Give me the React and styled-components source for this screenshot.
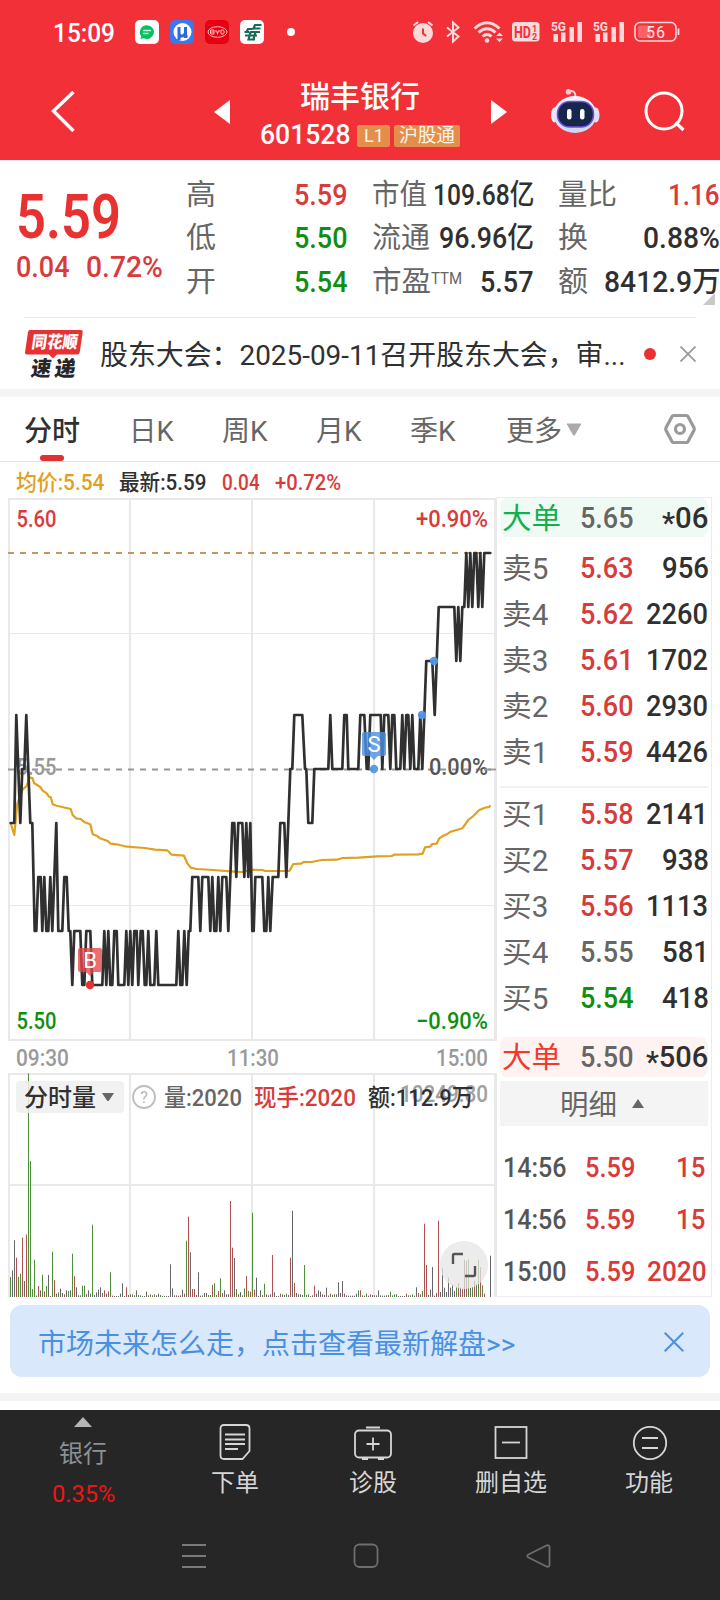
import React, { useLayoutEffect, useRef, useState } from "react";
import styled, { createGlobalStyle } from "styled-components";

const C = {
  brand: "#f23038",
  up: "#d93a3a",
  down: "#0f8f0f",
  ink: "#303030",
  sub: "#666666",
  mute: "#999999",
  grid: "#e9e9e9",
  orange: "#e0a020",
  blue: "#4a90e2",
};

const GlobalStyle = createGlobalStyle`
  * { box-sizing: border-box; }
  body { margin: 0; background: #fff; }
  svg { display: block; flex: none; }
`;

const Page = styled.div`
  width: 720px;
  height: 1600px;
  overflow: hidden;
  background: #fff;
  font-family: Roboto, "Noto Sans CJK SC", sans-serif;
  line-height: 1;
  color: ${C.ink};
  white-space: nowrap;
`;

/* ---------- text that keeps a fixed measure ---------- */

const FitBox = styled.span`
  display: inline-block;
  flex: none;
  width: ${(p) => p.$w}px;
  font-size: ${(p) => p.$size}px;
  font-weight: ${(p) => p.$weight || 400};
  color: ${(p) => p.$color || "inherit"};
  line-height: 1.1;
`;
const FitInner = styled.span`
  display: inline-block;
  transform-origin: 0 50%;
`;
function Fit({ w, size, weight, color, dy = 1, children }) {
  const ref = useRef(null);
  const [scale, setScale] = useState(1);
  useLayoutEffect(() => {
    if (ref.current) setScale(w / ref.current.offsetWidth);
  }, [w, children]);
  return (
    <FitBox $w={w} $size={size} $weight={weight} $color={color}>
      <FitInner ref={ref} style={{ transform: `translateY(${dy}px) scaleX(${scale})` }}>{children}</FitInner>
    </FitBox>
  );
}

/* ---------- status bar ---------- */

const RedTop = styled.div`
  background: ${C.brand};
  height: 160px;
  color: #fff;
`;
const StatusBar = styled.div`
  height: 64px;
  display: flex;
  align-items: center;
  padding: 0 40px 0 53px;
`;
const AppIcons = styled.div`
  display: flex;
  gap: 11px;
  margin-left: 20px;
`;
const AppIcon = styled.div`
  width: 24px;
  height: 24px;
  border-radius: 5px;
  overflow: hidden;
  background: ${(p) => p.$bg};
`;
const StatusDot = styled.i`
  width: 8px;
  height: 8px;
  border-radius: 50%;
  background: #fff;
  margin-left: 23px;
`;
const StatusRight = styled.div`
  margin-left: auto;
  display: flex;
  align-items: center;
`;
const Gap = styled.i`
  width: ${(p) => p.$w}px;
  flex: none;
`;

const P = "#ffd8da";
const Signal = () => (
  <svg width="32" height="24" viewBox="0 0 32 24">
    <text x="0" y="10.500" fontSize="13" fontWeight="700" fill={P} fontFamily="Roboto" textLength="15" lengthAdjust="spacingAndGlyphs">5G</text>
    <path d="M2.500 14h4.500v8h-4.500zM10 12.500h4.500v9.500H10zM18.500 7H23v15h-4.500zM26.500 2H31v20h-4.500z" fill={P} />
  </svg>
);

function Status() {
  return (
    <StatusBar>
      <Fit w={62} size={26} weight={500} dy={0.5}>15:09</Fit>
      <AppIcons>
        <AppIcon $bg="#fff">
          <svg width="24" height="24" viewBox="0 0 24 24">
            <path d="M12 5.200a7.200 6.900 0 1 1-3.600 13l-3 .8.800-2.700A7 7 0 0 1 12 5.200z" fill="#07c160" />
            <path d="M8 10.500h8M8 13.500h5.500" stroke="#c9f5dc" strokeWidth="1.400" />
          </svg>
        </AppIcon>
        <AppIcon $bg="#3b78f0">
          <svg width="24" height="24" viewBox="0 0 24 24">
            <circle cx="12.500" cy="12" r="9" fill="#fff" />
            <path d="M9 7v13M9 13q0 3 3 3t3-3M15.500 7v9.500h2" fill="none" stroke="#2b6be0" strokeWidth="3" />
          </svg>
        </AppIcon>
        <AppIcon $bg="#e60012">
          <svg width="24" height="24" viewBox="0 0 24 24" fill="none" stroke="#fbb" strokeWidth="1">
            <ellipse cx="12.500" cy="12" rx="9.500" ry="5.300" />
            <path d="M5.500 10h3.500v4H5.500zM5.500 12h3.500M11 10v2h3v-2M12.500 12v2.500M16 10h2.500q1.500 2 0 4H16z" />
          </svg>
        </AppIcon>
        <AppIcon $bg="#fff">
          <svg width="24" height="24" viewBox="0 0 24 24" fill="none" stroke="#176b57" strokeWidth="2.200">
            <path d="M21.500 5H15l-2 4.500M20.500 8.500h-6M20 12h-9l-1.500 2.500M12.500 9H8l-1.500 3M9.500 12H4.500M17 15.500H5M15 19.500H8.500l1-3.500M15.500 12l-2 7" />
          </svg>
        </AppIcon>
      </AppIcons>
      <StatusDot />
      <StatusRight>
        <svg width="22" height="24" viewBox="0 0 22 24">
          <circle cx="11" cy="13" r="10" fill={P} />
          <path d="M1.500 5.500L6 2M20.500 5.500L16 2" stroke={P} strokeWidth="2.200" />
          <path d="M11 8.500v5l3.200 2.500" fill="none" stroke={C.brand} strokeWidth="2" />
        </svg>
        <Gap $w={11} />
        <svg width="16" height="24" viewBox="0 0 16 24">
          <path d="M2 7.500l11.500 9L8 21.500V2.500L13.500 7.500 2 16.500" fill="none" stroke={P} strokeWidth="2" />
        </svg>
        <Gap $w={12} />
        <svg width="31" height="24" viewBox="0 0 31 24">
          <g fill="none" stroke={P} strokeWidth="3">
            <path d="M1.500 8.500q12.500-11.500 25 0" />
            <path d="M5.500 12.500q8.500-7.500 17 0" />
            <path d="M9.500 16.500q4.500-4 9 0" />
          </g>
          <circle cx="14" cy="20.500" r="2.300" fill={P} />
          <path d="M23 16l3.500-3.500L30 16zM23 18.500l3.500 3.500 3.500-3.500z" fill={P} />
        </svg>
        <Gap $w={8} />
        <svg width="28" height="20" viewBox="0 0 28 20">
          <rect width="27.500" height="19.500" rx="3.500" fill={P} />
          <text x="2" y="15.500" fontSize="16" fontWeight="700" fill={C.brand} fontFamily="Roboto" textLength="17" lengthAdjust="spacingAndGlyphs">HD</text>
          <text x="20" y="9.500" fontSize="9" fontWeight="700" fill={C.brand} fontFamily="Roboto">1</text>
          <text x="20" y="18" fontSize="9" fontWeight="700" fill={C.brand} fontFamily="Roboto">2</text>
        </svg>
        <Gap $w={11} />
        <Signal />
        <Gap $w={10} />
        <Signal />
        <Gap $w={9} />
        <svg width="46" height="22" viewBox="0 0 46 22">
          <rect x="1" y="1.500" width="41" height="18.500" rx="5" fill="none" stroke={P} strokeWidth="1.600" />
          <rect x="4" y="4.500" width="13" height="12.500" rx="2" fill="#ff6166" />
          <path d="M44.500 7.500v6.500" stroke={P} strokeWidth="1.800" />
          <text x="12" y="16.500" fontSize="16" fill="#ffe6e7" fontFamily="Roboto" textLength="19">56</text>
        </svg>
      </StatusRight>
    </StatusBar>
  );
}

/* ---------- header ---------- */

const Header = styled.header`
  height: 96px;
  display: flex;
  align-items: center;
  padding: 0 35px 0 50px;
`;
const Title = styled.div`
  width: 200px;
  margin: 4px 30px 0 30px;
  display: flex;
  flex-direction: column;
  gap: 13px;
`;
const TitleName = styled.div`
  padding-left: 40px;
  font-size: 30px;
  line-height: 30px;
  font-weight: 500;
`;
const CodeRow = styled.div`
  display: flex;
  align-items: center;
  height: 22px;
`;
const Tag = styled.span`
  width: ${(p) => p.$w}px;
  height: 22px;
  margin-left: ${(p) => p.$ml}px;
  border-radius: 2px;
  background: #e38f4b;
  color: #fff4ea;
  display: flex;
  align-items: center;
  justify-content: center;
`;

function Head() {
  return (
    <Header>
      <svg width="26" height="42" viewBox="0 0 26 42">
        <path d="M23.500 1L3.500 20l20 20" fill="none" stroke="#fff" strokeWidth="3.400" />
      </svg>
      <Gap $w={138} />
      <svg width="16" height="24" viewBox="0 0 16 24"><path d="M16 0v24L0 12z" fill="#fff" /></svg>
      <Title>
        <TitleName>瑞丰银行</TitleName>
        <CodeRow>
          <Fit w={90} size={28} weight={500} dy={0}>601528</Fit>
          <Tag $w={33} $ml={7}><Fit w={20} size={19} dy={0.5}>L1</Fit></Tag>
          <Tag $w={66} $ml={4}><Fit w={56} size={19}>沪股通</Fit></Tag>
        </CodeRow>
      </Title>
      <Gap $w={1} />
      <svg width="16" height="24" viewBox="0 0 16 24"><path d="M0 0v24l16-12z" fill="#fff" /></svg>
      <Gap $w={43} />
      <svg width="50" height="46" viewBox="0 0 50 46">
        <defs>
          <linearGradient id="shell" x1="0" y1="0" x2="0" y2="1">
            <stop offset="0" stopColor="#fbf6ff" />
            <stop offset="1" stopColor="#c9d4f7" />
          </linearGradient>
        </defs>
        <path d="M18.500 2.500q7-2 7 5" fill="none" stroke="#ffd3de" strokeWidth="2" />
        <circle cx="18.500" cy="2.800" r="2.800" fill="#ffc4d2" />
        <ellipse cx="4.500" cy="26" rx="3.500" ry="7.500" fill="#f3e6f8" />
        <ellipse cx="46" cy="26" rx="3.500" ry="7.500" fill="#e5dcf6" />
        <ellipse cx="25" cy="25.500" rx="21.500" ry="18.500" fill="url(#shell)" />
        <rect x="7.500" y="12.500" width="36" height="25.500" rx="12" fill="#16264c" stroke="#6f52d8" strokeWidth="1.500" />
        <rect x="17" y="20" width="4.500" height="10.500" rx="2.200" fill="#fff" />
        <rect x="30" y="20" width="4.500" height="10.500" rx="2.200" fill="#fff" />
      </svg>
      <Gap $w={44} />
      <svg width="42" height="42" viewBox="0 0 42 42">
        <circle cx="20" cy="20" r="18" fill="none" stroke="#fff" strokeWidth="3" />
        <path d="M31.500 31.500l8 7.500" stroke="#fff" strokeWidth="3.200" />
      </svg>
    </Header>
  );
}

/* ---------- quote summary ---------- */

const Quote = styled.section`
  height: 156px;
  display: flex;
  border-top: 1px solid #ffe9ec;
  position: relative;
`;
const PriceBlock = styled.div`
  width: 186px;
  padding: 22px 0 0 16px;
`;
const ChangeRow = styled.div`
  display: flex;
  gap: 16px;
  margin-top: 1px;
`;
const StatCol = styled.div`
  width: ${(p) => p.$w}px;
  margin-right: ${(p) => p.$mr}px;
  padding-top: 11px;
`;
const Stat = styled.div`
  display: flex;
  align-items: center;
  justify-content: space-between;
  height: 43.500px;
`;
const Label = styled.span`
  display: flex;
  color: ${C.sub};
`;
const Sup = styled.span`
  margin-top: 2px;
  height: 18px;
`;
const Corner = styled.i`
  position: absolute;
  right: 5px;
  bottom: 11px;
  border-left: 12px solid transparent;
  border-bottom: 12px solid #c9c9c9;
`;

const STATS = [
  { w: 162, mr: 24, rows: [["高", 30, "5.59", 54, C.up], ["低", 30, "5.50", 54, C.down], ["开", 30, "5.54", 54, C.down]] },
  { w: 162, mr: 24, rows: [["市值", 55, "109.68亿", 101, C.ink], ["流通", 58, "96.96亿", 95, C.ink], ["市盈", 59, "5.57", 54, C.ink, "TTM"]] },
  { w: 162, mr: 0, rows: [["量比", 59, "1.16", 52, C.up], ["换", 30, "0.88%", 77, C.ink], ["额", 30, "8412.9万", 116, C.ink]] },
];

function Summary() {
  return (
    <Quote>
      <PriceBlock>
        <Fit w={105} size={61} weight={600} color="#e83232">5.59</Fit>
        <ChangeRow>
          <Fit w={54} size={29} weight={500} color={C.up}>0.04</Fit>
          <Fit w={77} size={29} weight={500} color={C.up}>0.72%</Fit>
        </ChangeRow>
      </PriceBlock>
      {STATS.map((col, i) => (
        <StatCol key={i} $w={col.w} $mr={col.mr}>
          {col.rows.map(([label, lw, value, vw, color, sup]) => (
            <Stat key={label}>
              <Label>
                <Fit w={lw} size={29} dy={2}>{label}</Fit>
                {sup && <Sup><Fit w={31} size={16} dy={3}>{sup}</Fit></Sup>}
              </Label>
              <Fit w={vw} size={29} weight={500} color={color} dy={1.5}>{value}</Fit>
            </Stat>
          ))}
        </StatCol>
      ))}
      <Corner />
    </Quote>
  );
}

/* ---------- news ---------- */

const News = styled.div`
  height: 72px;
  margin: 0 24px;
  border-top: 1px solid #ebebeb;
  display: flex;
  align-items: center;
`;
const NewsGap = styled.div`
  height: 1px;
`;
const RedDot = styled.i`
  width: 12px;
  height: 12px;
  border-radius: 50%;
  background: #e83232;
  margin: 0 24px 0 18px;
`;
const Band = styled.div`
  height: 8px;
  background: #f4f4f4;
`;

function NewsRow() {
  return (
    <News>
      <svg width="60" height="52" viewBox="0 0 60 52">
        <path d="M6 2h51q2 0 1.700 2l-3 20.500q-.4 2-2.400 2H33l-4 4-4-4H3q-2.300 0-2-2L4 4q.4-2 2-2z" fill="#e63232" />
        <g fontFamily="Noto Sans CJK SC" fontWeight="900" transform="skewX(-8)">
          <text x="10" y="20.500" fontSize="17" fill="#fff" textLength="46" lengthAdjust="spacingAndGlyphs">同花顺</text>
          <text x="13" y="48" fontSize="21" fill="#262626" textLength="20" lengthAdjust="spacingAndGlyphs">速</text>
          <text x="36.500" y="48" fontSize="21" fill="#262626" textLength="21" lengthAdjust="spacingAndGlyphs">递</text>
        </g>
      </svg>
      <Gap $w={16} />
      <Fit w={526} size={28} dy={2.5}>股东大会：2025-09-11召开股东大会，审...</Fit>
      <RedDot />
      <svg width="16" height="16" viewBox="0 0 16 16"><path d="M.5.5l15 15M15.500.5l-15 15" stroke="#999" strokeWidth="1.800" /></svg>
    </News>
  );
}

/* ---------- tabs ---------- */

const Tabs = styled.nav`
  height: 65px;
  border-bottom: 1px solid #e4e4e4;
  display: flex;
  align-items: center;
  padding-left: 24px;
`;
const Tab = styled.div`
  position: relative;
  width: ${(p) => p.$w}px;
  height: 64px;
  display: flex;
  align-items: center;
  color: ${(p) => (p.$on ? C.ink : C.sub)};
  &::after {
    content: "";
    display: ${(p) => (p.$on ? "block" : "none")};
    position: absolute;
    left: 16px;
    bottom: 0;
    width: 24px;
    height: 6px;
    border-radius: 3px;
    background: #e03030;
  }
`;
const TABS = [["分时", 105, 56, true], ["日K", 93, 45], ["周K", 94, 46], ["月K", 94, 46], ["季K", 96, 46], ["更多", 60, 56]];

function TabBar() {
  return (
    <Tabs>
      {TABS.map(([t, w, tw, on]) => (
        <Tab key={t} $w={w} $on={on}><Fit w={tw} size={28} weight={on ? 500 : 400} dy={2.5}>{t}</Fit></Tab>
      ))}
      <svg width="16" height="13" viewBox="0 0 16 13"><path d="M1.500.5h13q1 0 .5 1L9 12q-1 1-2 0L1 1.500Q.5.5 1.500.5z" fill="#aaa" /></svg>
      <Gap $w={82} />
      <svg width="32" height="32" viewBox="0 0 32 32" fill="none" stroke="#9a9a9a" strokeWidth="3.200">
        <path d="M9.500 2.500h13q1 0 1.500 1L30 14.800q.5 1.200 0 2.400L24 28.500q-.5 1-1.500 1h-13q-1 0-1.500-1L2 17.200q-.5-1.200 0-2.400L8 3.500q.5-1 1.500-1z" />
        <circle cx="16" cy="16" r="4.500" />
      </svg>
    </Tabs>
  );
}

/* ---------- charts ---------- */

const Body = styled.div`
  display: flex;
  height: 843px;
`;
const ChartCol = styled.div`
  width: 497px;
  padding-left: 8px;
`;
const Legend = styled.div`
  height: 36px;
  display: flex;
  align-items: center;
  padding-left: 8px;
`;
const AxisRow = styled.div`
  height: 32px;
  display: flex;
  align-items: center;
  justify-content: space-between;
  padding: 0 9px 0 8px;
`;

// price path: x in thirds of a pixel, y in ticks of 0.01 above 5.50
const PRICE = `32,4 43,4 49,6 61,4 67,5 73,5 79,6 91,4 97,4 104,2 109,2 115,3 122,3 127,2 133,3 139,2 145,2 151,3 157,2 169,4 175,2 187,2 193,3 200,3 206,2 211,2 217,1 223,2 241,2 247,1 253,1 259,2 271,2 277,1 307,1 313,2 319,1 325,2 331,1 337,1 343,2 350,2 355,1 373,1 379,2 385,1 391,2 397,1 403,2 410,2 415,1 422,2 428,2 434,1 439,1 445,2 451,1 463,1 469,2 475,1 529,1 535,2 541,1 547,1 553,2 560,1 566,2 571,2 577,3 595,3 601,2 607,3 625,3 631,2 637,3 643,2 649,2 655,3 661,2 667,3 679,3 685,2 697,4 703,4 709,3 715,4 727,4 733,3 739,4 745,3 751,4 757,2 761,2 766,3 787,3 793,2 799,2 805,3 811,2 818,3 835,3 841,4 853,4 859,3 865,4 871,5 877,5 883,6 907,6 915,5 919,5 925,4 937,4 943,5 985,5 991,6 997,5 1027,5 1033,6 1040,6 1045,5 1075,5 1081,6 1093,6 1100,5 1105,5 1111,6 1142,6 1147,5 1153,6 1165,6 1171,5 1177,6 1183,6 1189,5 1201,5 1207,6 1213,5 1219,6 1225,6 1231,5 1237,6 1243,5 1255,5 1261,6 1267,5 1279,7 1297,7 1304,6 1316,8 1363,8 1369,7 1375,8 1381,7 1387,8 1393,8 1399,9 1405,8 1411,9 1417,8 1423,9 1429,9 1435,8 1441,9 1447,8 1453,9 1471,9`;
const AVG = `32,370 43,405 52,310 60,290 68,268 80,258 88,232 97,234 103,250 120,260 128,272 140,280 147,290 152,292 158,313 170,317 212,327 218,345 228,355 242,357 254,367 271,373 278,403 290,407 300,415 323,423 332,431 350,433 380,440 435,444 465,449 502,451 515,464 552,467 562,490 572,503 590,507 640,510 690,514 725,516 755,509 788,510 795,513 868,513 880,492 902,491 912,486 935,486 965,480 1010,479 1028,474 1075,473 1132,469 1175,468 1182,464 1255,463 1268,461 1275,442 1290,440 1297,432 1310,431 1317,416 1330,407 1340,403 1352,395 1387,385 1405,360 1420,348 1438,330 1455,323 1468,321 1471,316`;
const pts = (s, f) => s.trim().split(/\s+/).map((p) => f(...p.split(",").map(Number)).map((v) => v.toFixed(1)).join(",")).join(" ");
const pricePts = pts(PRICE, (x, n) => [x / 3 - 8, 541 - 54 * n]);
const avgPts = pts(AVG, (x, y) => [x / 3 - 8, 202 + y / 3]);

// per-minute volume: colour letter + height in thirds of a pixel
const VOL = `g60 k80 k170 r118 g60 g70 r178 k48 r188 g671 g408 g24 g112 k4 r33 k20 g67 r17 g33 k66 r3 g136 r50 k10 g14 k25 k12 r8 k20 g18 k20 g130 r62 k29 k5 k5 g34 g34 r8 k20 k10 g217 k6 k14 k22 k29 k12 r20 k10 r17 g74 k4 r3 k3 k3 k10 k41 k3 r29 k6 r8 g8 k5 k20 g6 g5 k3 k3 k16 g5 r8 k5 g8 k5 k10 g6 k3 k3 k3 k3 k98 k26 k5 r5 k4 k5 k22 r10 g169 r241 k134 r24 r24 k6 k74 r4 g5 k12 k12 g6 k6 r36 g41 g6 r18 g56 r12 k20 k8 k8 r288 r148 k117 g24 r8 k15 k5 g26 r63 g18 r16 g253 r22 k58 k3 k20 r6 g40 r8 k5 k8 r126 k14 k3 k3 r10 k8 k6 g10 k6 r118 k259 r42 k12 k8 k8 k6 g96 k6 g8 k3 k5 r34 k10 k20 k16 r8 k6 k28 k4 r10 k6 g8 k8 k44 k12 k48 r10 k5 k4 k4 k4 k4 k10 g20 r20 k5 k4 g10 k4 r8 k6 k5 k5 k20 k5 k4 k4 k5 r6 g16 k5 g8 g8 k3 k3 k3 k3 r10 k5 k5 g8 k4 k29 r12 k8 g18 r220 r96 k6 k22 k90 k4 r12 r229 k15 k86 k28 k15 k58 k28 k38 k18 g30 r42 k28 r25 k112 r108 g114 k28 g30 r48 k38 g112 r90 g35 r10 k0 k0 k124`
  .split(" ");
const VCOL = { g: "#4c8f3a", r: "#b05050", k: "#666666" };

const ChartText = ({ x, y, w, end, fill, children }) => (
  <text x={end ? x - w : x} y={y} fontSize="24" fontWeight="500" fill={fill} fontFamily="Roboto" textLength={w} lengthAdjust="spacingAndGlyphs">{children}</text>
);
const GridV = ({ h }) => (
  <g stroke={C.grid} strokeWidth="2">
    {[1, 122, 244, 366].map((x) => <line key={x} x1={x} x2={x} y1="0" y2={h} />)}
    <line x1="487.500" x2="487.500" y1="0" y2={h} strokeWidth="3" />
  </g>
);

const PriceChart = () => (
  <svg width="489" height="543" viewBox="0 0 489 543">
    <GridV h={543} />
    <g stroke={C.grid}>
      <path d="M0 1h489M0 542h489" strokeWidth="2" />
      <path d="M0 135.500h489M0 407.500h489" strokeWidth="1.200" />
    </g>
    <path d="M0 55h483" stroke="#c4985c" strokeWidth="2" strokeDasharray="6 6" />
    <path d="M0 271.500h483" stroke="#969696" strokeWidth="2" strokeDasharray="6 6" />
    <ChartText x={8.5} y={277} w={40} fill="#999">5.55</ChartText>
    <polyline points={avgPts} fill="none" stroke={C.orange} strokeWidth="2.200" strokeLinejoin="round" />
    <polyline points={pricePts} fill="none" stroke="#303030" strokeWidth="2.700" strokeLinejoin="round" strokeLinecap="round" />
    <ChartText x={8.5} y={29} w={40} fill={C.up}>5.60</ChartText>
    <ChartText x={480} y={29} w={72} end fill={C.up}>+0.90%</ChartText>
    <ChartText x={480} y={277} w={59} end fill="#555">0.00%</ChartText>
    <ChartText x={8.5} y={531} w={40} fill={C.down}>5.50</ChartText>
    <ChartText x={480} y={531} w={72} end fill={C.down}>−0.90%</ChartText>
    <path d="M476 271.500h12" stroke="#969696" strokeWidth="1.800" />
    <g opacity=".93" fill="#5195e6">
      <circle cx="366" cy="271" r="4.200" />
      <circle cx="414" cy="217" r="4.200" />
      <circle cx="426" cy="163" r="4.200" />
    </g>
    <path d="M356 234h20q2 0 2 2v20q0 2-2 2h-6l-4 4-4-4h-6q-2 0-2-2v-20q0-2 2-2z" fill="#4a90e2" opacity=".8" />
    <text x="366" y="254" fontSize="22" fill="#fff" textAnchor="middle" fontFamily="Roboto">S</text>
    <path d="M72 450h20q2 0 2 2v20q0 2-2 2h-6l-4 4-4-4h-6q-2 0-2-2v-20q0-2 2-2z" fill="#e64646" opacity=".78" />
    <text x="82" y="470" fontSize="22" fill="#fff" textAnchor="middle" fontFamily="Roboto">B</text>
    <circle cx="82" cy="487" r="4.200" fill="#e63232" />
  </svg>
);

const VolumeBox = styled.div`
  position: relative;
  height: 224px;
`;
const VolumeHead = styled.div`
  position: absolute;
  left: 8px;
  top: 8px;
  height: 32px;
  display: flex;
  align-items: center;
`;
const Picker = styled.div`
  width: 108px;
  height: 32px;
  border-radius: 4px;
  background: rgba(238, 238, 238, 0.85);
  display: flex;
  align-items: center;
  justify-content: space-between;
  padding: 0 10px 0 8px;
`;
const Expand = styled.div`
  position: absolute;
  left: 432px;
  top: 168px;
  width: 48px;
  height: 48px;
  border-radius: 50%;
  background: rgba(230, 230, 230, 0.75);
  display: flex;
  align-items: center;
  justify-content: center;
`;

const VolumeChart = () => (
  <VolumeBox>
    <svg width="489" height="224" viewBox="0 0 489 224">
      <GridV h={224} />
      <path d="M0 1h489M0 112h489" stroke={C.grid} strokeWidth="2" />
      <ChartText x={480} y={29} w={88} end fill="#a0a0a0">10249.80</ChartText>
      {VOL.map((v, i) => {
        const h = Number(v.slice(1)) / 3;
        return <rect key={i} x={2 + 2 * i} y={224 - h} width="1" height={h} fill={VCOL[v[0]]} />;
      })}
    </svg>
    <VolumeHead>
      <Picker>
        <Fit w={72} size={24} weight={500}>分时量</Fit>
        <svg width="12" height="8" viewBox="0 0 12 8"><path d="M0 0h12L7 7.500q-1 1-2 0z" fill="#666" /></svg>
      </Picker>
      <Gap $w={8} />
      <svg width="24" height="24" viewBox="0 0 24 24">
        <circle cx="12" cy="12" r="11" fill="none" stroke="#bdbdbd" strokeWidth="1.800" />
        <text x="12" y="17.500" fontSize="16" textAnchor="middle" fill="#b4b4b4" fontFamily="Roboto">?</text>
      </svg>
      <Gap $w={8} />
      <Fit w={78} size={24} weight={500} color={C.sub}>量:2020</Fit>
      <Gap $w={12} />
      <Fit w={102} size={24} weight={500} color={C.up}>现手:2020</Fit>
      <Gap $w={12} />
      <Fit w={106} size={24} weight={500}>额:112.9万</Fit>
    </VolumeHead>
    <Expand>
      <svg width="26" height="26" viewBox="0 0 26 26" fill="none" stroke="#555" strokeWidth="2.400">
        <path d="M2 12V3.500q0-1.500 1.500-1.500H12M24 14v8.500q0 1.500-1.500 1.500H14" />
      </svg>
    </Expand>
  </VolumeBox>
);

/* ---------- order book ---------- */

const Book = styled.aside`
  width: 215px;
  height: 800px;
  margin-top: 35px;
  border: 1px solid #ececec;
  border-left: 0;
  padding: 0 3px;
`;
const BookRow = styled.div`
  height: ${(p) => p.$h || 46}px;
  margin-top: ${(p) => p.$mt || 0}px;
  background: ${(p) => p.$bg || "transparent"};
  border-radius: 8px;
  display: flex;
  align-items: center;
  padding: 0 ${(p) => p.$pr ?? 0}px 0 ${(p) => p.$pl ?? 2}px;
`;
const Cell = styled.span`
  width: ${(p) => p.$w}px;
  flex: none;
`;
const Qty = styled.span`
  flex: 1;
  display: flex;
  justify-content: flex-end;
`;
const Star = styled.span`
  vertical-align: -5px;
  line-height: 0;
`;
const Divider = styled.div`
  height: 2px;
  margin: 11.500px 0 2.500px;
  background: #f2f2f2;
`;
const DetailBar = styled.div`
  height: 45px;
  margin-top: 4px;
  background: #f4f4f4;
  display: flex;
  align-items: center;
  justify-content: center;
  gap: 15px;
  padding-right: 4px;
  color: ${C.sub};
`;

const Order = ({ label, lc = C.sub, price, pc = C.up, qty, ...row }) => (
  <BookRow {...row}>
    <Cell $w={78}><Fit w={label === "大单" ? 59 : 46} size={29} color={lc} dy={2}>{label}</Fit></Cell>
    <Fit w={54} size={29} weight={500} color={pc}>{price}</Fit>
    <Qty>
      <Fit w={15.500 * qty.length} size={29} weight={500}>
        {qty[0] === "*" ? <><Star>*</Star>{qty.slice(1)}</> : qty}
      </Fit>
    </Qty>
  </BookRow>
);

const SELL = [["卖5", "5.63", "956"], ["卖4", "5.62", "2260"], ["卖3", "5.61", "1702"], ["卖2", "5.60", "2930"], ["卖1", "5.59", "4426"]];
const BUY = [["买1", "5.58", "2141"], ["买2", "5.57", "938"], ["买3", "5.56", "1113"], ["买4", "5.55", "581", C.sub], ["买5", "5.54", "418", C.down]];
const TICKS = [["14:56", "5.59", "15"], ["14:56", "5.59", "15"], ["15:00", "5.59", "2020"]];

function OrderBook() {
  return (
    <Book>
      <Order label="大单" lc="#10b050" price="5.65" pc={C.sub} qty="*06" $h={39} $bg="#f0faf5" />
      {SELL.map(([l, p, q], i) => <Order key={l} label={l} price={p} qty={q} $mt={i ? 0 : 7.500} />)}
      <Divider />
      {BUY.map(([l, p, q, c]) => <Order key={l} label={l} price={p} qty={q} pc={c} />)}
      <Order label="大单" lc="#f03a2e" price="5.50" pc={C.sub} qty="*506" $h={40} $mt={16.500} $bg="#fff3f2" />
      <DetailBar>
        <Fit w={57} size={28} dy={3}>明细</Fit>
        <svg width="12" height="9" viewBox="0 0 12 9"><path d="M6 0l6 9H0z" fill="#666" /></svg>
      </DetailBar>
      {TICKS.map(([t, p, q], i) => (
        <BookRow key={i} $h={52} $mt={i ? 0 : 15} $pl={3} $pr={2}>
          <Cell $w={82}><Fit w={64} size={27} weight={500} color="#555" dy={2}>{t}</Fit></Cell>
          <Fit w={51} size={27} weight={500} color={C.up} dy={2}>{p}</Fit>
          <Qty><Fit w={14.800 * q.length} size={27} weight={500} color={C.up} dy={2}>{q}</Fit></Qty>
        </BookRow>
      ))}
    </Book>
  );
}

/* ---------- banner and bottom bars ---------- */

const Banner = styled.div`
  height: 72px;
  margin: 0 10px 16px;
  border-radius: 12px;
  background: #d9e8fb;
  color: ${C.blue};
  display: flex;
  align-items: center;
  justify-content: space-between;
  padding: 2px 26px 0 28px;
`;
const Dark = styled.div`
  margin-top: 9px;
  height: 190px;
  background: #262626;
`;
const Actions = styled.div`
  height: 108px;
  display: flex;
`;
const Sector = styled.div`
  width: 166px;
  display: flex;
  flex-direction: column;
  align-items: center;
  padding-top: 7px;
  color: #8c9196;
`;
const Action = styled.div`
  width: 138px;
  display: flex;
  flex-direction: column;
  align-items: center;
  padding-top: 13px;
  gap: 7px;
  color: #d6d6d6;
`;
const SectorName = styled.div`
  margin-top: 11px;
`;
const SectorChange = styled.div`
  margin-top: 15px;
`;
const SysNav = styled.div`
  display: flex;
  align-items: center;
  height: 76px;
  padding-left: 181px;
`;

const ACTIONS = [
  ["下单", <><path d="M7 2h22q3.500 0 3.500 3.500v22.500l-7 8H7q-3.500 0-3.500-3.500v-27Q3.500 2 7 2z" /><path d="M8 11.500h20M8 16.500h20M8 21h20M8 26h13" /></>],
  ["诊股", <><rect x="0" y="7.500" width="36" height="27" rx="4" /><path d="M11 4.500h14M7 36h6M23 36h6M18 14.500v13M11.500 21h13" /></>],
  ["删自选", <><rect x="2.500" y="4" width="31" height="31" /><path d="M9 19.500h18" /></>],
  ["功能", <><circle cx="19" cy="20" r="16.200" /><path d="M11 15h16M11 25h16" /></>],
];

export default function App() {
  return (
    <Page>
      <GlobalStyle />
      <RedTop>
        <Status />
        <Head />
      </RedTop>
      <Summary />
      <NewsGap />
      <NewsRow />
      <Band />
      <TabBar />
      <Body>
        <ChartCol>
          <Legend>
            <Fit w={88} size={22} weight={500} color={C.orange} dy={2.5}>均价:5.54</Fit>
            <Gap $w={15} />
            <Fit w={87} size={22} weight={500} dy={2.5}>最新:5.59</Fit>
            <Gap $w={16} />
            <Fit w={38} size={22} weight={500} color={C.up} dy={2.5}>0.04</Fit>
            <Gap $w={15} />
            <Fit w={66} size={22} weight={500} color={C.up} dy={2.5}>+0.72%</Fit>
          </Legend>
          <PriceChart />
          <AxisRow>
            <Fit w={53} size={24} weight={500} color={C.mute}>09:30</Fit>
            <Fit w={52} size={24} weight={500} color={C.mute}>11:30</Fit>
            <Fit w={52} size={24} weight={500} color={C.mute}>15:00</Fit>
          </AxisRow>
          <VolumeChart />
        </ChartCol>
        <OrderBook />
      </Body>
      <Banner>
        <Fit w={477} size={28} dy={2.5}>市场未来怎么走，点击查看最新解盘&gt;&gt;</Fit>
        <svg width="20" height="20" viewBox="0 0 20 20"><path d="M.7.7l18.600 18.600M19.300.7L.7 19.300" stroke={C.blue} strokeWidth="2" /></svg>
      </Banner>
      <Band />
      <Dark>
        <Actions>
          <Sector>
            <svg width="18" height="10" viewBox="0 0 18 10"><path d="M9 0l9 10H0z" fill="#b5b5b5" /></svg>
            <SectorName><Fit w={48} size={24} dy={2.5}>银行</Fit></SectorName>
            <SectorChange><Fit w={63} size={24} color="#f01414" dy={1.5}>0.35%</Fit></SectorChange>
          </Sector>
          {ACTIONS.map(([t, icon]) => (
            <Action key={t}>
              <svg width="36" height="38" viewBox="0 0 36 38" overflow="visible" fill="none" stroke="#d6d6d6" strokeWidth="1.800">{icon}</svg>
              <Fit w={24 * t.length} size={24} dy={2}>{t}</Fit>
            </Action>
          ))}
        </Actions>
        <SysNav>
          <svg width="26" height="26" viewBox="0 0 26 26" stroke="#7a7a7a" strokeWidth="2"><path d="M1 2h24M1 13h24M1 24h24" /></svg>
          <Gap $w={146} />
          <svg width="26" height="26" viewBox="0 0 26 26"><rect x="1.500" y="1.500" width="23" height="22.500" rx="5" fill="none" stroke="#6e6e6e" strokeWidth="1.800" /></svg>
          <Gap $w={146} />
          <svg width="26" height="26" viewBox="0 0 26 26"><path d="M21.500 2.500q3-1 3 2v17q0 3-3 2L3.500 14.500q-2.500-1.500 0-3z" fill="none" stroke="#6e6e6e" strokeWidth="1.800" /></svg>
        </SysNav>
      </Dark>
    </Page>
  );
}
